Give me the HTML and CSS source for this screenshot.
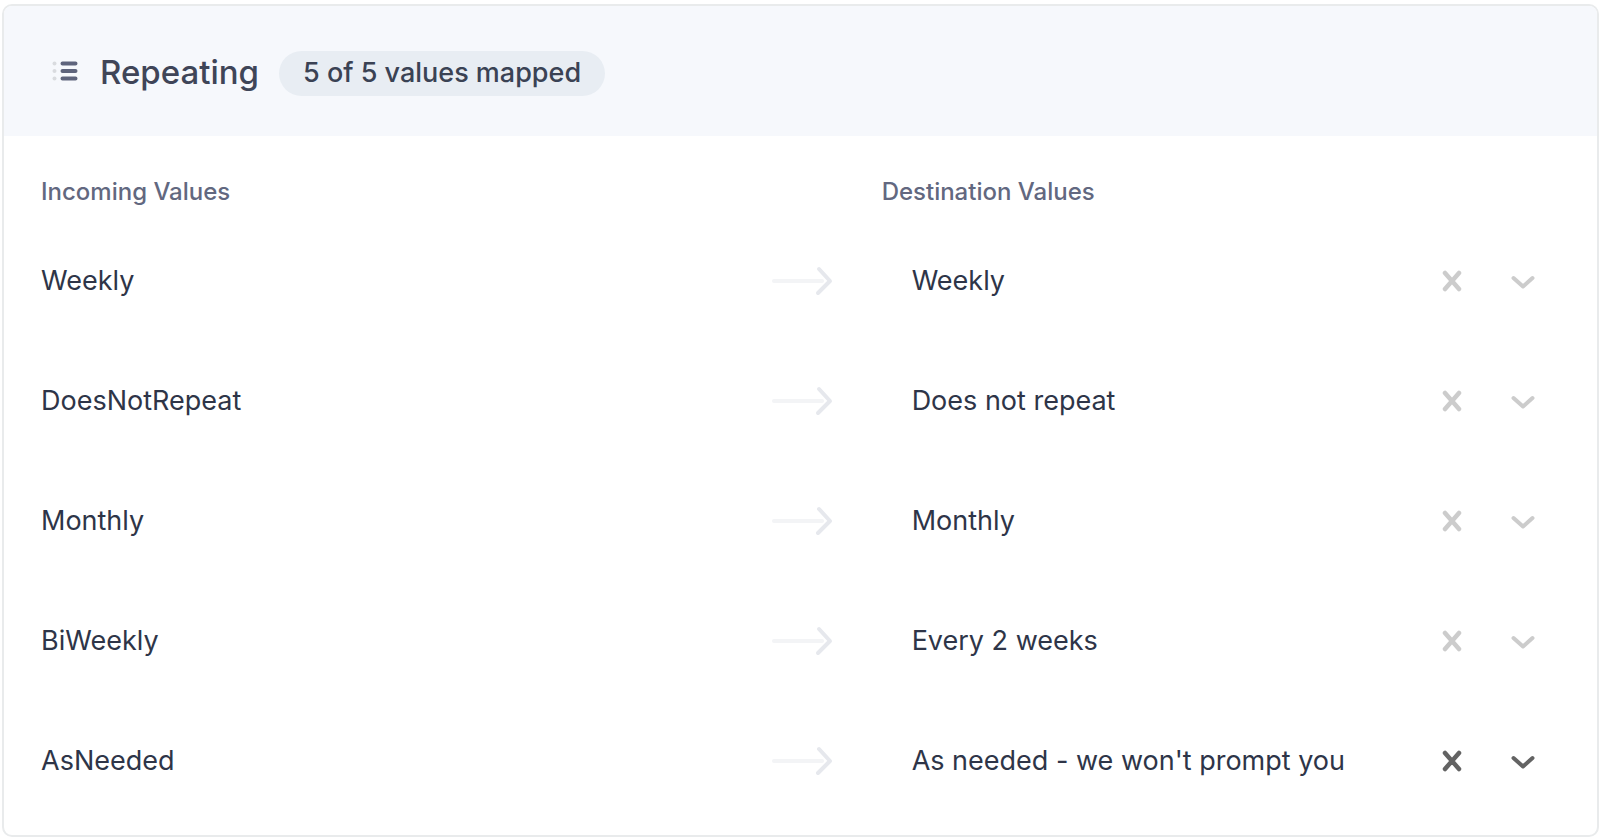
FILE: index.html
```html
<!DOCTYPE html>
<html lang="en">
<head>
<meta charset="utf-8">
<meta name="viewport" content="width=device-width, initial-scale=1">
<title>Repeating</title>
<link rel="stylesheet" href="styles.css">
</head>
<body>
<svg class="sprite" aria-hidden="true">
  <symbol id="arrow" viewBox="0 0 62 30">
    <path d="M2 15H50" stroke="#f3f4f6" stroke-width="4" stroke-linecap="round"/>
    <path d="M47 3L58 15L46 27" fill="none" stroke="#e6e8ed" stroke-width="4" stroke-linecap="round" stroke-linejoin="round"/>
  </symbol>
  <symbol id="cross" viewBox="0 0 20 22">
    <path d="M3 3L17 19M17 3L3 19" fill="none" stroke="currentColor" stroke-width="4.5" stroke-linecap="round"/>
  </symbol>
  <symbol id="chevron" viewBox="0 0 24 14">
    <path d="M2.5 3L12 11.5L21.5 3" fill="none" stroke="currentColor" stroke-width="4" stroke-linecap="round" stroke-linejoin="round"/>
  </symbol>
</svg>
<main class="card">
  <header class="card-header">
    <svg class="list-icon" viewBox="0 0 26 20" aria-hidden="true">
      <g fill="#d9dbdf"><circle cx="2.5" cy="2.5" r="2"/><circle cx="2.5" cy="10" r="2"/><circle cx="2.5" cy="17.5" r="2"/></g>
      <path d="M10.5 2.5H23.5M10.5 10H23.5M10.5 17.5H23.5" stroke="#5e647c" stroke-width="4" stroke-linecap="round"/>
    </svg>
    <h1 class="title">Repeating</h1>
    <span class="badge">5 of 5 values mapped</span>
  </header>
  <table class="mapping">
    <colgroup><col class="col-incoming"><col class="col-arrow"><col></colgroup>
    <thead>
      <tr><th scope="col">Incoming Values</th><td></td><th scope="col">Destination Values</th></tr>
    </thead>
    <tbody>
      <tr>
        <td><label for="v1">Weekly</label></td>
        <td><svg class="arrow"><use href="#arrow"/></svg></td>
        <td><div class="picker"><select id="v1"><option>Weekly</option></select><button type="button" class="clear" aria-label="Clear Weekly"><svg class="cross"><use href="#cross"/></svg></button><svg class="chevron"><use href="#chevron"/></svg></div></td>
      </tr>
      <tr>
        <td><label for="v2">DoesNotRepeat</label></td>
        <td><svg class="arrow"><use href="#arrow"/></svg></td>
        <td><div class="picker"><select id="v2"><option>Does not repeat</option></select><button type="button" class="clear" aria-label="Clear DoesNotRepeat"><svg class="cross"><use href="#cross"/></svg></button><svg class="chevron"><use href="#chevron"/></svg></div></td>
      </tr>
      <tr>
        <td><label for="v3">Monthly</label></td>
        <td><svg class="arrow"><use href="#arrow"/></svg></td>
        <td><div class="picker"><select id="v3"><option>Monthly</option></select><button type="button" class="clear" aria-label="Clear Monthly"><svg class="cross"><use href="#cross"/></svg></button><svg class="chevron"><use href="#chevron"/></svg></div></td>
      </tr>
      <tr>
        <td><label for="v4">BiWeekly</label></td>
        <td><svg class="arrow"><use href="#arrow"/></svg></td>
        <td><div class="picker"><select id="v4"><option>Every 2 weeks</option></select><button type="button" class="clear" aria-label="Clear BiWeekly"><svg class="cross"><use href="#cross"/></svg></button><svg class="chevron"><use href="#chevron"/></svg></div></td>
      </tr>
      <tr>
        <td><label for="v5">AsNeeded</label></td>
        <td><svg class="arrow"><use href="#arrow"/></svg></td>
        <td><div class="picker active"><select id="v5"><option>As needed - we won't prompt you</option></select><button type="button" class="clear" aria-label="Clear AsNeeded"><svg class="cross"><use href="#cross"/></svg></button><svg class="chevron"><use href="#chevron"/></svg></div></td>
      </tr>
    </tbody>
  </table>
</main>
</body>
</html>
```
FILE: styles.css
```css
* { box-sizing: border-box; }
body {
  margin: 0;
  padding: 4px 1px 2px 2px;
  background: #fff;
  color: #2e3548;
  font-family: Inter, "Liberation Sans", sans-serif;
  font-size: 27px;
  line-height: 36px;
}
.sprite { display: none; }
.card {
  border: 2px solid #e9ebec;
  border-radius: 10px;
  background: #fff;
  overflow: hidden;
}
.card-header {
  display: flex;
  align-items: center;
  padding: 40px 48px 38px;
  background: #f6f8fc;
}
.list-icon { width: 26px; height: 20px; margin: 0 22px 2px 0; }
.title {
  margin: 0 20px 0 0;
  color: #3f4558;
  font-size: 33px;
  font-weight: 500;
  line-height: 52px;
}
.badge {
  margin-top: 3px;
  padding: 4px 24px 5px;
  border-radius: 23px;
  background: #e8edf3;
  color: #3a4254;
  font-weight: 500;
}
.mapping {
  width: 100%;
  padding: 0 37px 14px;
  border-spacing: 0;
  table-layout: fixed;
}
.col-incoming { width: 48.1%; }
.col-arrow { width: 110px; }
th {
  height: 85px;
  padding: 40px 0 12px;
  color: #626880;
  font-size: 24px;
  font-weight: 500;
  line-height: 32px;
  text-align: left;
  vertical-align: top;
}
td { padding: 0; }
tbody td { height: 120px; }
.arrow { display: block; width: 62px; height: 30px; }
.picker {
  display: flex;
  align-items: center;
  padding: 0 25px 0 30px;
  color: #ccc;
}
.picker.active { color: #636363; }
select {
  flex: 1;
  min-width: 0;
  padding: 0;
  border: 0;
  appearance: none;
  background: none;
  color: #2e3548;
  font: inherit;
}
.clear {
  display: flex;
  margin-right: 49px;
  padding: 0;
  border: 0;
  background: none;
  color: inherit;
}
.cross { width: 20px; height: 22px; }
.chevron { width: 24px; height: 14px; margin-top: 2px; pointer-events: none; }
```
